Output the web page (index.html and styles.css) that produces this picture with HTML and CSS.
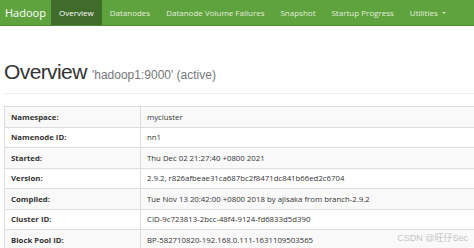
FILE: index.html
```html
<!DOCTYPE html>
<html lang="en">
<head>
  <meta charset="UTF-8">
  <title>Namenode information</title>
  <link rel="stylesheet" href="styles.css">
</head>
<body>

<nav class="navbar">
  <a class="brand" href="#">Hadoop</a>
  <ul class="nav">
    <li class="active"><a href="#">Overview</a></li>
    <li><a href="#">Datanodes</a></li>
    <li><a href="#">Datanode Volume Failures</a></li>
    <li><a href="#">Snapshot</a></li>
    <li><a href="#">Startup Progress</a></li>
    <li><a href="#">Utilities <span class="caret"></span></a></li>
  </ul>
</nav>

<div class="container">
  <div class="page-header">
    <h1>Overview <small>'hadoop1:9000' (active)</small></h1>
  </div>

  <table class="info">
    <tr><th>Namespace:</th><td>mycluster</td></tr>
    <tr><th>Namenode ID:</th><td>nn1</td></tr>
    <tr><th>Started:</th><td>Thu Dec 02 21:27:40 +0800 2021</td></tr>
    <tr><th>Version:</th><td>2.9.2, r826afbeae31ca687bc2f8471dc841b66ed2c6704</td></tr>
    <tr><th>Compiled:</th><td>Tue Nov 13 20:42:00 +0800 2018 by ajisaka from branch-2.9.2</td></tr>
    <tr><th>Cluster ID:</th><td>CID-9c723813-2bcc-48f4-9124-fd6833d5d390</td></tr>
    <tr><th>Block Pool ID:</th><td>BP-582710820-192.168.0.111-1631109503565</td></tr>
  </table>
</div>

<div class="watermark">CSDN @旺仔Sec</div>

</body>
</html>
```

FILE: styles.css
```css
body {
  margin: 0;
  overflow: hidden;
  font-family: "Open Sans", "Noto Sans", sans-serif;
  color: #333;
  background: #fff;
}
a {
  text-decoration: none;
}
.navbar {
  display: flex;
  align-items: stretch;
  height: 25px;
  background-color: #5fa33e;
  border-bottom: 1px solid #4f8a33;
}
.brand {
  display: flex;
  align-items: center;
  width: 46px;
  padding-left: 5px;
  font-size: 11px;
  color: #fff;
}
.nav {
  display: flex;
  margin: 0;
  padding: 0;
  list-style: none;
}
.nav a {
  display: flex;
  align-items: center;
  height: 100%;
  padding: 0 8px;
  font-size: 8px;
  color: #e4eedd;
  white-space: nowrap;
}
.nav .active a {
  background-color: #3f6b2b;
  color: #fff;
}
.caret {
  display: inline-block;
  margin-left: 4px;
  border-top: 2px solid #cfe0c6;
  border-left: 2px solid transparent;
  border-right: 2px solid transparent;
}
.container {
  width: 490px;
  margin-left: 4px;
}
.page-header {
  margin-top: 34px;
  padding-bottom: 6px;
  border-bottom: 1px solid #eee;
}
h1 {
  margin: 0;
  font-family: "Liberation Sans", Arial, sans-serif;
  font-size: 21px;
  font-weight: normal;
  line-height: 24px;
  letter-spacing: -0.6px;
  color: #333;
}
h1 small {
  font-size: 12px;
  letter-spacing: 0;
  color: #777;
}
.info {
  width: 100%;
  margin-top: 12px;
  border-collapse: collapse;
  font-size: 7.8px;
}
.info th, .info td {
  height: 19.5px;
  padding: 0 6px;
  border: 1px solid #ddd;
  text-align: left;
  white-space: nowrap;
}
.info th {
  width: 123px;
  font-weight: bold;
}
.info tr:nth-child(odd) {
  background-color: #f9f9f9;
}
.watermark {
  position: absolute;
  right: 6px;
  bottom: 4px;
  font-family: "Liberation Sans", "Noto Sans CJK SC", sans-serif;
  font-size: 9px;
  color: #c4c4c4;
}
```
